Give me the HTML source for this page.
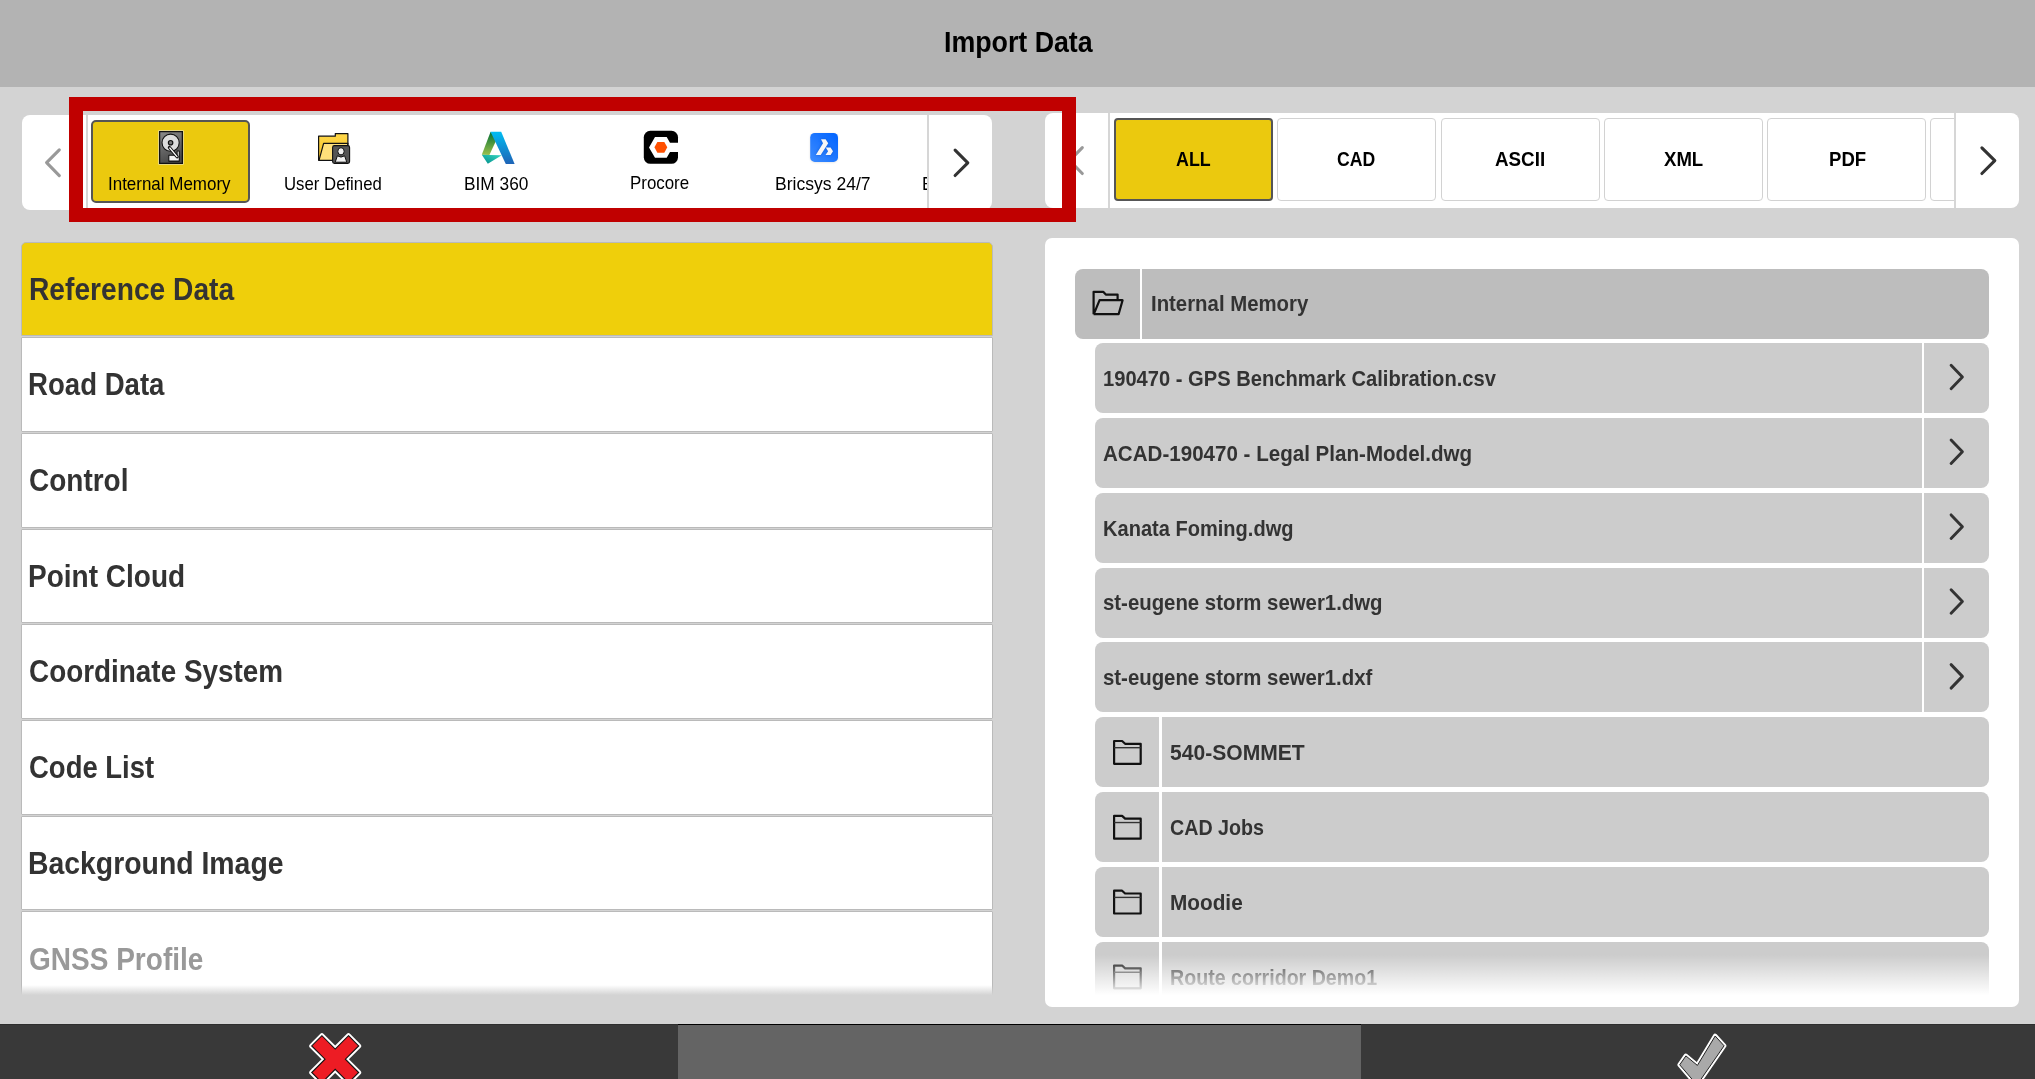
<!DOCTYPE html>
<html><head><meta charset="utf-8"><style>
html,body{margin:0;padding:0;}
body{width:2035px;height:1079px;position:relative;overflow:hidden;background:#d3d3d3;font-family:"Liberation Sans",sans-serif;}
.a{position:absolute;box-sizing:border-box;}
.t{position:absolute;white-space:nowrap;transform-origin:0 0;}
svg{position:absolute;overflow:visible;}
</style></head><body>
<div class="a" style="left:0;top:0;width:2035px;height:87px;background:#b3b3b3"></div>
<div class="t" style="left:943.69px;top:27.23px;font-size:29.5px;line-height:29.5px;font-weight:bold;color:#000;transform:scaleX(0.9068)">Import Data</div>
<div class="a" style="left:22px;top:115px;width:970px;height:95px;background:#fff;border-radius:8px"></div>
<div class="a" style="left:88px;top:115px;width:840px;height:95px;overflow:hidden"><div class="a" style="left:3px;top:5px;width:159px;height:83px;background:#ebc90e;border:2px solid #555;border-radius:5px"></div><div class="t" style="left:20.17px;top:59.54px;font-size:18.5px;line-height:18.5px;font-weight:normal;color:#000;transform:scaleX(0.9167)">Internal Memory</div><div class="t" style="left:195.89px;top:59.54px;font-size:18.5px;line-height:18.5px;font-weight:normal;color:#000;transform:scaleX(0.9057)">User Defined</div><div class="t" style="left:376.47px;top:59.54px;font-size:18.5px;line-height:18.5px;font-weight:normal;color:#000;transform:scaleX(0.9343)">BIM 360</div><div class="t" style="left:542.29px;top:58.64px;font-size:18.5px;line-height:18.5px;font-weight:normal;color:#000;transform:scaleX(0.9127)">Procore</div><div class="t" style="left:687.45px;top:59.54px;font-size:18.5px;line-height:18.5px;font-weight:normal;color:#000;transform:scaleX(0.9485)">Bricsys 24/7</div><div class="t" style="left:834.30px;top:59.96px;font-size:18px;line-height:18px;color:#000;transform:scaleX(0.95)">Box</div></div>
<svg style="left:0;top:0" width="2035" height="1079">
 <defs>
  <linearGradient id="hddg" x1="0" y1="0" x2="0.3" y2="1"><stop offset="0" stop-color="#8a8a8a"/><stop offset="1" stop-color="#4a4a4a"/></linearGradient>
  <linearGradient id="fldg" x1="0" y1="0" x2="0" y2="1"><stop offset="0" stop-color="#ffd84a"/><stop offset="1" stop-color="#f5c021"/></linearGradient>
  <linearGradient id="adA" x1="0" y1="0" x2="0" y2="1"><stop offset="0" stop-color="#00bdf2"/><stop offset="1" stop-color="#1e63b6"/></linearGradient>
  <linearGradient id="adL" x1="0" y1="0" x2="0" y2="1"><stop offset="0" stop-color="#006e33"/><stop offset="1" stop-color="#9bc04b"/></linearGradient>
  <linearGradient id="adB" x1="0" y1="1" x2="1" y2="0"><stop offset="0" stop-color="#008e8a"/><stop offset="1" stop-color="#38d6c2"/></linearGradient>
  <linearGradient id="brg" x1="0" y1="1" x2="1" y2="0"><stop offset="0" stop-color="#3d8cff"/><stop offset="1" stop-color="#0063ff"/></linearGradient>
  <filter id="bl1" x="-30%" y="-30%" width="160%" height="160%"><feGaussianBlur stdDeviation="0.8"/></filter>
  <filter id="bl2" x="-50%" y="-50%" width="200%" height="200%"><feGaussianBlur stdDeviation="1.6"/></filter>
 </defs>
 <rect x="158.5" y="130.5" width="25" height="34" fill="#fff"/>
 <rect x="159.6" y="131.6" width="22.8" height="31.8" fill="url(#hddg)" stroke="#111" stroke-width="1.3"/>
 <circle cx="170.6" cy="142.7" r="8.6" fill="#dcdcdc" stroke="#111" stroke-width="1.1"/>
 <circle cx="170.6" cy="142.7" r="2.2" fill="#777" stroke="#111" stroke-width="1.2"/>
 <path d="M168.8 155.3 H174.6 L177.1 157.6 V151 H179.3 V161.1 H168.8 Z" fill="#f2f2f2" stroke="#111" stroke-width="1.1" stroke-linejoin="round"/>
 <path d="M169.4 147.4 L177.2 156.8" stroke="#111" stroke-width="3.2" stroke-linecap="round"/>
 <path d="M169.8 148 L177 156.6" stroke="#fff" stroke-width="1.3" stroke-linecap="round"/>
 <path d="M318.6 136.2 h16.7 v-2.6 h12.6 v26.6 h-29.3 z" fill="url(#fldg)" stroke="#111" stroke-width="1.2" stroke-linejoin="round"/>
 <path d="M323.6 143.4 h24.4 l-4 17 h-25 z" fill="#ffe07a" stroke="#111" stroke-width="1.2" stroke-linejoin="round"/>
 <rect x="332.6" y="145.6" width="17" height="17.8" rx="1.8" fill="#555" stroke="#111" stroke-width="1.1"/>
 <ellipse cx="341" cy="151.3" rx="3.2" ry="3.6" fill="#f2f2f2" stroke="#111" stroke-width="1"/>
 <path d="M335.2 162.2 l2.2 -6.4 q3.6 2.6 7.2 0 l2.2 6.4 z" fill="#f2f2f2" stroke="#111" stroke-width="1"/>
 <path d="M490.6 131.7 L481.8 154.8 L489.4 155 L496.6 139.4 Z" fill="url(#adL)"/>
 <path d="M481.8 154.8 L487.8 163.8 L501.8 155.2 L489.4 155 Z" fill="url(#adB)"/>
 <path d="M490.6 131.7 L501.2 131.7 L514.6 164 L505.8 164 Z" fill="url(#adA)"/>
 <rect x="643.8" y="130.8" width="34.2" height="33" rx="6.5" fill="#000"/>
 <path d="M655 136.9 L666.7 136.9 L670 142.7 L678.2 142.7 L678.2 152.1 L670 152.1 L666.7 157.7 L655 157.7 L649 147.4 Z" fill="#fff"/>
 <path d="M657.4 141.9 L664.3 141.9 L667.3 147.3 L664.3 152.7 L657.4 152.7 L654.4 147.3 Z" fill="#ff5000"/>
 <rect x="810.2" y="133.4" width="27.8" height="29" rx="4.5" fill="#000" opacity="0.12" filter="url(#bl1)"/>
 <rect x="810.2" y="132.9" width="27.8" height="29" rx="4.5" fill="url(#brg)"/>
 <g filter="url(#bl2)" opacity="0.55"><path d="M821 139.3 L825.6 139.3 L828.2 143.3 L820.7 155 L815.8 155 L823 143.3 Z" fill="#0040b0"/>
 <path d="M826.2 147.4 L830.8 147.4 L833 151.3 L830.8 155 L826.2 155 L828.5 151.3 Z" fill="#0040b0"/></g>
 <path d="M821 139.3 L825.6 139.3 L828.2 143.3 L820.7 155 L815.8 155 L823 143.3 Z" fill="#f6f6f6"/>
 <path d="M825.8 147.4 L830.6 147.4 L833 151.3 L830.6 155 L825.5 155 L828.1 151.3 Z" fill="#f6f6f6"/>
</svg>
<div class="a" style="left:1045px;top:113px;width:974px;height:95px;background:#fff;border-radius:8px"></div>
<div class="a" style="left:1110px;top:113px;width:845px;height:95px;overflow:hidden"><div class="a" style="left:4.00px;top:5px;width:159px;height:83px;border-radius:4px;background:#ebc90e;border:2px solid #555;"></div><div class="t" style="left:66.11px;top:36.07px;font-size:20px;line-height:20px;font-weight:bold;color:#000;transform:scaleX(0.8919)">ALL</div><div class="a" style="left:167.25px;top:5px;width:159px;height:83px;border-radius:4px;background:#fff;border:1px solid #d2d2d2;"></div><div class="t" style="left:227.32px;top:36.07px;font-size:20px;line-height:20px;font-weight:bold;color:#000;transform:scaleX(0.881)">CAD</div><div class="a" style="left:330.50px;top:5px;width:159px;height:83px;border-radius:4px;background:#fff;border:1px solid #d2d2d2;"></div><div class="t" style="left:384.76px;top:36.07px;font-size:20px;line-height:20px;font-weight:bold;color:#000;transform:scaleX(0.9392)">ASCII</div><div class="a" style="left:493.75px;top:5px;width:159px;height:83px;border-radius:4px;background:#fff;border:1px solid #d2d2d2;"></div><div class="t" style="left:553.60px;top:36.07px;font-size:20px;line-height:20px;font-weight:bold;color:#000;transform:scaleX(0.9286)">XML</div><div class="a" style="left:657.00px;top:5px;width:159px;height:83px;border-radius:4px;background:#fff;border:1px solid #d2d2d2;"></div><div class="t" style="left:718.87px;top:36.07px;font-size:20px;line-height:20px;font-weight:bold;color:#000;transform:scaleX(0.9289)">PDF</div><div class="a" style="left:820.25px;top:5px;width:159px;height:83px;border-radius:4px;background:#fff;border:1px solid #d2d2d2;"></div></div>
<div class="a" style="left:86px;top:115px;width:2px;height:95px;background:#d6d6d6"></div><div class="a" style="left:927px;top:115px;width:2px;height:95px;background:#d6d6d6"></div>
<div class="a" style="left:1108px;top:113px;width:2px;height:95px;background:#d6d6d6"></div><div class="a" style="left:1954px;top:113px;width:2px;height:95px;background:#d6d6d6"></div>
<svg style="left:0;top:0" width="2035" height="1079"><polyline points="59.3,149.8 46.6,162.7 59.3,175.7" fill="none" stroke="#999" stroke-width="3.1" stroke-linecap="round" stroke-linejoin="round"/><polyline points="955.1,150.1 967.8,162.8 955.1,175.5" fill="none" stroke="#333" stroke-width="3.1" stroke-linecap="round" stroke-linejoin="round"/><polyline points="1082.3,147.7 1069.6,160.6 1082.3,173.5" fill="none" stroke="#999" stroke-width="3.1" stroke-linecap="round" stroke-linejoin="round"/><polyline points="1981.9,147.8 1994.8,160.7 1981.9,173.5" fill="none" stroke="#333" stroke-width="3.1" stroke-linecap="round" stroke-linejoin="round"/></svg>
<div class="a" style="left:69px;top:97px;width:1007px;height:125px;border:14px solid #c00000"></div>
<div class="a" style="left:21px;top:242px;width:972px;height:753px;overflow:hidden"><div class="a" style="left:0;top:-0.30px;width:972px;height:94.65px;background:#efcf0b;border:1px solid #bababa;border-radius:5px 5px 1px 1px;"></div><div class="t" style="left:7.58px;top:31.76px;font-size:31px;line-height:31px;font-weight:bold;color:#333;transform:scaleX(0.9089)">Reference Data</div><div class="a" style="left:0;top:95.35px;width:972px;height:94.65px;background:#fff;border:1px solid #bababa;border-radius:1px;"></div><div class="t" style="left:7.42px;top:127.41px;font-size:31px;line-height:31px;font-weight:bold;color:#333;transform:scaleX(0.8901)">Road Data</div><div class="a" style="left:0;top:191.00px;width:972px;height:94.65px;background:#fff;border:1px solid #bababa;border-radius:1px;"></div><div class="t" style="left:8.30px;top:223.06px;font-size:31px;line-height:31px;font-weight:bold;color:#333;transform:scaleX(0.9028)">Control</div><div class="a" style="left:0;top:286.65px;width:972px;height:94.65px;background:#fff;border:1px solid #bababa;border-radius:1px;"></div><div class="t" style="left:7.39px;top:318.71px;font-size:31px;line-height:31px;font-weight:bold;color:#333;transform:scaleX(0.9035)">Point Cloud</div><div class="a" style="left:0;top:382.30px;width:972px;height:94.65px;background:#fff;border:1px solid #bababa;border-radius:1px;"></div><div class="t" style="left:8.30px;top:414.36px;font-size:31px;line-height:31px;font-weight:bold;color:#333;transform:scaleX(0.8993)">Coordinate System</div><div class="a" style="left:0;top:477.95px;width:972px;height:94.65px;background:#fff;border:1px solid #bababa;border-radius:1px;"></div><div class="t" style="left:8.01px;top:510.01px;font-size:31px;line-height:31px;font-weight:bold;color:#333;transform:scaleX(0.8864)">Code List</div><div class="a" style="left:0;top:573.60px;width:972px;height:94.65px;background:#fff;border:1px solid #bababa;border-radius:1px;"></div><div class="t" style="left:7.07px;top:605.66px;font-size:31px;line-height:31px;font-weight:bold;color:#333;transform:scaleX(0.9156)">Background Image</div><div class="a" style="left:0;top:669.25px;width:972px;height:94.65px;background:#fff;border:1px solid #bababa;border-radius:1px;"></div><div class="t" style="left:7.90px;top:701.91px;font-size:31px;line-height:31px;font-weight:bold;color:#999;transform:scaleX(0.9037)">GNSS Profile</div><div class="a" style="left:0;top:743px;width:972px;height:10px;background:linear-gradient(rgba(211,211,211,0),#d3d3d3)"></div></div>
<div class="a" style="left:1045px;top:237.6px;width:974px;height:769.6px;background:#fff;border-radius:7px"></div>
<div class="a" style="left:0;top:0;width:2035px;height:995px;overflow:hidden"><div class="a" style="left:1075px;top:268.5px;width:914px;height:70px;background:#bdbdbd;border-radius:8px"></div><div class="a" style="left:1140px;top:268.5px;width:2px;height:70px;background:#fff"></div><div class="t" style="left:1150.97px;top:292.88px;font-size:22px;line-height:22px;font-weight:bold;color:#333;transform:scaleX(0.9254)">Internal Memory</div><div class="a" style="left:1095px;top:343.00px;width:894px;height:70px;background:#cccccc;border-radius:8px"></div><div class="a" style="left:1922px;top:343.00px;width:2px;height:70px;background:#fff"></div><div class="t" style="left:1102.88px;top:367.88px;font-size:22px;line-height:22px;font-weight:bold;color:#333;transform:scaleX(0.9154)">190470 - GPS Benchmark Calibration.csv</div><div class="a" style="left:1095px;top:417.86px;width:894px;height:70px;background:#cccccc;border-radius:8px"></div><div class="a" style="left:1922px;top:417.86px;width:2px;height:70px;background:#fff"></div><div class="t" style="left:1102.87px;top:442.73px;font-size:22px;line-height:22px;font-weight:bold;color:#333;transform:scaleX(0.9349)">ACAD-190470 - Legal Plan-Model.dwg</div><div class="a" style="left:1095px;top:492.71px;width:894px;height:70px;background:#cccccc;border-radius:8px"></div><div class="a" style="left:1922px;top:492.71px;width:2px;height:70px;background:#fff"></div><div class="t" style="left:1102.89px;top:517.59px;font-size:22px;line-height:22px;font-weight:bold;color:#333;transform:scaleX(0.9116)">Kanata Foming.dwg</div><div class="a" style="left:1095px;top:567.57px;width:894px;height:70px;background:#cccccc;border-radius:8px"></div><div class="a" style="left:1922px;top:567.57px;width:2px;height:70px;background:#fff"></div><div class="t" style="left:1102.87px;top:592.45px;font-size:22px;line-height:22px;font-weight:bold;color:#333;transform:scaleX(0.9257)">st-eugene storm sewer1.dwg</div><div class="a" style="left:1095px;top:642.43px;width:894px;height:70px;background:#cccccc;border-radius:8px"></div><div class="a" style="left:1922px;top:642.43px;width:2px;height:70px;background:#fff"></div><div class="t" style="left:1102.87px;top:667.30px;font-size:22px;line-height:22px;font-weight:bold;color:#333;transform:scaleX(0.9255)">st-eugene storm sewer1.dxf</div><div class="a" style="left:1095px;top:717.28px;width:894px;height:70px;background:#cccccc;border-radius:8px"></div><div class="a" style="left:1159px;top:717.28px;width:2.5px;height:70px;background:#fff"></div><div class="t" style="left:1169.54px;top:742.16px;font-size:22px;line-height:22px;font-weight:bold;color:#333;transform:scaleX(0.9579)">540-SOMMET</div><div class="a" style="left:1095px;top:792.14px;width:894px;height:70px;background:#cccccc;border-radius:8px"></div><div class="a" style="left:1159px;top:792.14px;width:2.5px;height:70px;background:#fff"></div><div class="t" style="left:1169.61px;top:817.02px;font-size:22px;line-height:22px;font-weight:bold;color:#333;transform:scaleX(0.8942)">CAD Jobs</div><div class="a" style="left:1095px;top:867.00px;width:894px;height:70px;background:#cccccc;border-radius:8px"></div><div class="a" style="left:1159px;top:867.00px;width:2.5px;height:70px;background:#fff"></div><div class="t" style="left:1169.56px;top:891.88px;font-size:22px;line-height:22px;font-weight:bold;color:#333;transform:scaleX(0.944)">Moodie</div><div class="a" style="left:1095px;top:941.86px;width:894px;height:70px;background:#cccccc;border-radius:8px"></div><div class="a" style="left:1159px;top:941.86px;width:2.5px;height:70px;background:#fff"></div><div class="t" style="left:1169.61px;top:966.73px;font-size:22px;line-height:22px;font-weight:bold;color:#333;transform:scaleX(0.8918)">Route corridor Demo1</div><svg style="left:0;top:0" width="2035" height="1079"><polyline points="1951.1,365.20 1962.4,376.95 1951.1,388.70" fill="none" stroke="#333" stroke-width="2.9" stroke-linecap="round" stroke-linejoin="round"/><polyline points="1951.1,440.06 1962.4,451.81 1951.1,463.56" fill="none" stroke="#333" stroke-width="2.9" stroke-linecap="round" stroke-linejoin="round"/><polyline points="1951.1,514.91 1962.4,526.66 1951.1,538.41" fill="none" stroke="#333" stroke-width="2.9" stroke-linecap="round" stroke-linejoin="round"/><polyline points="1951.1,589.77 1962.4,601.52 1951.1,613.27" fill="none" stroke="#333" stroke-width="2.9" stroke-linecap="round" stroke-linejoin="round"/><polyline points="1951.1,664.63 1962.4,676.38 1951.1,688.13" fill="none" stroke="#333" stroke-width="2.9" stroke-linecap="round" stroke-linejoin="round"/><g transform="translate(0,-0.01)"><path d="M1114.1 763.8 V741 h8 l3 2.8 h15.6 v20 z" fill="none" stroke="#111" stroke-width="2.2" stroke-linejoin="round"/><path d="M1114.1 747.7 h26.6" stroke="#333" stroke-width="1.4"/></g><g transform="translate(0,74.84)"><path d="M1114.1 763.8 V741 h8 l3 2.8 h15.6 v20 z" fill="none" stroke="#111" stroke-width="2.2" stroke-linejoin="round"/><path d="M1114.1 747.7 h26.6" stroke="#333" stroke-width="1.4"/></g><g transform="translate(0,149.70)"><path d="M1114.1 763.8 V741 h8 l3 2.8 h15.6 v20 z" fill="none" stroke="#111" stroke-width="2.2" stroke-linejoin="round"/><path d="M1114.1 747.7 h26.6" stroke="#333" stroke-width="1.4"/></g><g transform="translate(0,224.56)"><path d="M1114.1 763.8 V741 h8 l3 2.8 h15.6 v20 z" fill="none" stroke="#111" stroke-width="2.2" stroke-linejoin="round"/><path d="M1114.1 747.7 h26.6" stroke="#333" stroke-width="1.4"/></g><path d="M1093.6 314.2 V291.8 h9.6 l2.6 2.8 h11.8 v5.6 M1093.6 314.2 h25 l4 -14 h-23 l-5.8 14" fill="none" stroke="#111" stroke-width="2.2" stroke-linejoin="round"/></svg><div class="a" style="left:1075px;top:955px;width:930px;height:40px;background:linear-gradient(rgba(255,255,255,0),#fff)"></div></div>
<div class="a" style="left:0;top:1024px;width:2035px;height:55px;background:#393939;border-top:1px solid #2e2e2e"></div>
<div class="a" style="left:678px;top:1024px;width:683px;height:55px;background:#646464;border-top:1px solid #000"></div>
<svg style="left:0;top:0" width="2035" height="1079">
<g transform="translate(335.2,1059.2) rotate(45)">
<path d="M-7.2,-26 h14.4 v18.8 h18.8 v14.4 h-18.8 v18.8 h-14.4 v-18.8 h-18.8 v-14.4 h18.8 z" fill="#fff" stroke="#fff" stroke-width="5" stroke-linejoin="round"/>
<path d="M-7.2,-26 h14.4 v18.8 h18.8 v14.4 h-18.8 v18.8 h-14.4 v-18.8 h-18.8 v-14.4 h18.8 z" fill="#ed1c24" stroke="#111" stroke-width="1.1" stroke-linejoin="miter"/>
</g>
<path d="M1715.2,1036 L1724.1,1045.8 L1697,1085 L1679.7,1064.8 L1685.9,1055.9 L1697.4,1065.4 Z" fill="#fff" stroke="#fff" stroke-width="4.6" stroke-linejoin="round"/>
<path d="M1715.2,1036 L1724.1,1045.8 L1697,1085 L1679.7,1064.8 L1685.9,1055.9 L1697.4,1065.4 Z" fill="#a9a9a9" stroke="#222" stroke-width="1"/>
</svg>
</body></html>
